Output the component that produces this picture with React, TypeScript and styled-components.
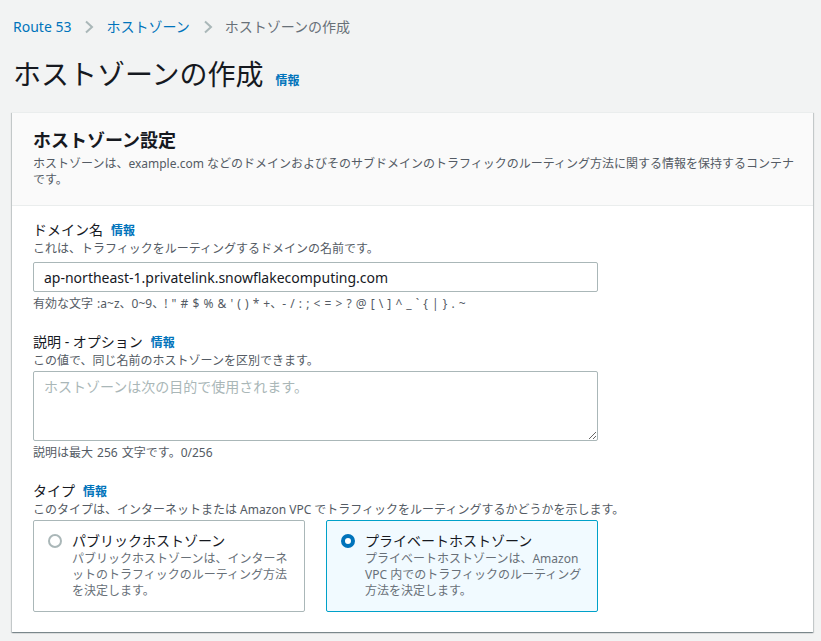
import React from "react";
import styled, { createGlobalStyle } from "styled-components";

const Global = createGlobalStyle`
  html, body { margin: 0; padding: 0; background: #f2f3f3; }
  body { font-family: "Noto Sans", "Noto Sans CJK JP", sans-serif; color: #16191f; }
  * { box-sizing: border-box; }
`;

const Page = styled.div`
  padding: 16px 8px 8px 12px;
`;

const Breadcrumbs = styled.nav`
  display: flex;
  align-items: center;
  font-size: 14px;
  line-height: 22px;
  padding-left: 1px;
`;

const Crumb = styled.span<{ $current?: boolean }>`
  color: ${(p) => (p.$current ? "#687078" : "#0073bb")};
`;

const Sep = styled.span`
  display: inline-flex;
  margin: 0 12px 0 13px;
  color: #aab7b8;
`;

const TitleRow = styled.div`
  display: flex;
  align-items: baseline;
  gap: 4px;
  margin-top: 18px;
  padding-left: 1px;
`;

const Title = styled.h1`
  margin: 0;
  font-size: 28px;
  font-weight: 400;
  line-height: 36px;
  color: #16191f;
`;

const Info = styled.a`
  color: #0073bb;
  font-size: 12px;
  font-weight: 700;
  text-decoration: none;
  margin-left: 8px;
`;

const Card = styled.section`
  margin-top: 20px;
  background: #fff;
  border-top: 1px solid #eaeded;
  box-shadow: 0 1px 1px 0 rgba(0, 28, 36, 0.3), 1px 1px 1px 0 rgba(0, 28, 36, 0.15),
    -1px 1px 1px 0 rgba(0, 28, 36, 0.15);
`;

const CardHeader = styled.header`
  background: #fafafa;
  border-bottom: 1px solid #eaeded;
  padding: 16px 12px 17px 21px;
`;

const CardTitle = styled.h2`
  margin: 0;
  font-size: 18px;
  font-weight: 700;
  line-height: 22px;
`;

const CardDesc = styled.p`
  margin: 5px 0 0;
  font-size: 12px;
  line-height: 16px;
  color: #545b64;
`;

const CardBody = styled.div`
  padding: 14px 20px 20px 21px;
  display: flex;
  flex-direction: column;
  gap: 20px;
`;

const Field = styled.div`
  display: flex;
  flex-direction: column;
`;

const Label = styled.div`
  display: flex;
  align-items: baseline;
  font-size: 14px;
  line-height: 20px;
  color: #16191f;
`;

const Desc = styled.div`
  font-size: 12px;
  line-height: 16px;
  color: #545b64;
`;

const Input = styled.input`
  margin-top: 5px;
  width: 565px;
  height: 30px;
  border: 1px solid #aab7b8;
  border-radius: 2px;
  padding: 0 10px;
  font-family: inherit;
  font-size: 14px;
  color: #16191f;
  background: #fff;
  outline: none;
`;

const TextArea = styled.textarea`
  margin-top: 2px;
  width: 565px;
  height: 70px;
  border: 1px solid #aab7b8;
  border-radius: 2px;
  padding: 4px 10px;
  font-family: inherit;
  font-size: 14px;
  line-height: 22px;
  color: #16191f;
  background: #fff;
  outline: none;
  resize: vertical;
  &::placeholder { color: #aab7b8; }
`;

const Hint = styled.div`
  margin-top: 4px;
  font-size: 12px;
  line-height: 16px;
  color: #545b64;
  word-spacing: 1px;
`;

const Tiles = styled.div`
  margin-top: 2px;
  display: grid;
  grid-template-columns: 272px 272px;
  gap: 21px;
`;

const Tile = styled.label<{ $selected?: boolean }>`
  display: flex;
  gap: 10px;
  padding: 10px 10px 12px 14px;
  border: 1px solid ${(p) => (p.$selected ? "#00a1c9" : "#aab7b8")};
  background: ${(p) => (p.$selected ? "#f1faff" : "#fff")};
  border-radius: 2px;
`;

const Radio = styled.span<{ $checked?: boolean }>`
  flex: none;
  width: 14px;
  height: 14px;
  margin-top: 3px;
  border-radius: 50%;
  background: #fff;
  border: ${(p) => (p.$checked ? "4px solid #0073bb" : "2px solid #aab7b8")};
`;

const TileText = styled.div`
  display: flex;
  flex-direction: column;
`;

const TileTitle = styled.div`
  font-size: 14px;
  line-height: 20px;
  color: #16191f;
`;

const TileDesc = styled.div`
  font-size: 12px;
  line-height: 16px;
  color: #687078;
`;

const Chevron = () => (
  <svg width="10" height="14" viewBox="0 0 10 14" fill="none">
    <path d="M2 1.5 L8 7 L2 12.5" stroke="currentColor" strokeWidth="2" />
  </svg>
);

export default function App() {
  return (
    <>
      <Global />
      <Page>
        <Breadcrumbs>
          <Crumb>Route 53</Crumb>
          <Sep><Chevron /></Sep>
          <Crumb>ホストゾーン</Crumb>
          <Sep><Chevron /></Sep>
          <Crumb $current>ホストゾーンの作成</Crumb>
        </Breadcrumbs>
        <TitleRow>
          <Title>ホストゾーンの作成</Title>
          <Info href="#">情報</Info>
        </TitleRow>
        <Card>
          <CardHeader>
            <CardTitle>ホストゾーン設定</CardTitle>
            <CardDesc>
              ホストゾーンは、example.com などのドメインおよびそのサブドメインのトラフィックのルーティング方法に関する情報を保持するコンテナです。
            </CardDesc>
          </CardHeader>
          <CardBody>
            <Field>
              <Label>
                ドメイン名<Info href="#">情報</Info>
              </Label>
              <Desc>これは、トラフィックをルーティングするドメインの名前です。</Desc>
              <Input defaultValue="ap-northeast-1.privatelink.snowflakecomputing.com" />
              <Hint>
                有効な文字 :a~z、0~9、! " # $ % &amp; ' ( ) * +、- / : ; &lt; = &gt; ? @ [ \ ] ^ _ ` {"{"} | {"}"} . ~
              </Hint>
            </Field>
            <Field>
              <Label>
                説明 - オプション<Info href="#">情報</Info>
              </Label>
              <Desc>この値で、同じ名前のホストゾーンを区別できます。</Desc>
              <TextArea placeholder="ホストゾーンは次の目的で使用されます。" />
              <Hint>説明は最大 256 文字です。0/256</Hint>
            </Field>
            <Field>
              <Label>
                タイプ<Info href="#">情報</Info>
              </Label>
              <Desc>このタイプは、インターネットまたは Amazon VPC でトラフィックをルーティングするかどうかを示します。</Desc>
              <Tiles>
                <Tile>
                  <Radio />
                  <TileText>
                    <TileTitle>パブリックホストゾーン</TileTitle>
                    <TileDesc>パブリックホストゾーンは、インターネットのトラフィックのルーティング方法を決定します。</TileDesc>
                  </TileText>
                </Tile>
                <Tile $selected>
                  <Radio $checked />
                  <TileText>
                    <TileTitle>プライベートホストゾーン</TileTitle>
                    <TileDesc>プライベートホストゾーンは、Amazon VPC 内でのトラフィックのルーティング方法を決定します。</TileDesc>
                  </TileText>
                </Tile>
              </Tiles>
            </Field>
          </CardBody>
        </Card>
      </Page>
    </>
  );
}
